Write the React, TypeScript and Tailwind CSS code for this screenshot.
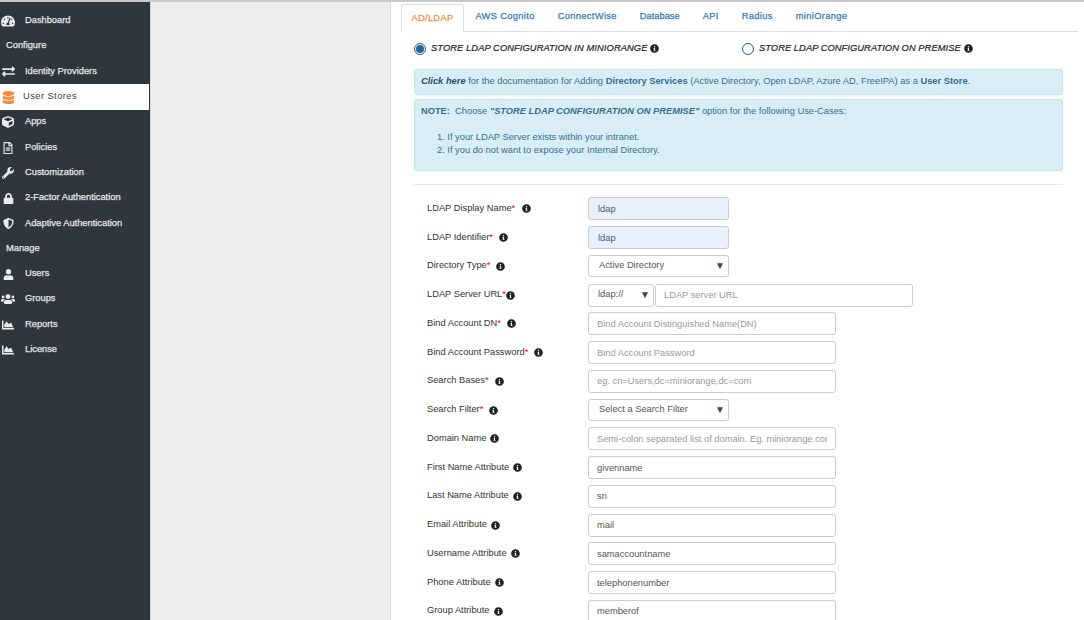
import React from "react";
import { FaTachometerAlt, FaExchangeAlt, FaDatabase, FaCube, FaRegFileAlt, FaWrench, FaLock, FaShieldAlt, FaUser, FaUsers, FaChartArea, FaInfoCircle } from "react-icons/fa";

type Nav = { label: string; icon?: React.ComponentType<{ className?: string }>; head?: boolean; active?: boolean; cls?: string };

const nav: Nav[] = [
  { label: "Dashboard", icon: FaTachometerAlt, cls: "text-[14px]" },
  { label: "Configure", head: true },
  { label: "Identity Providers", icon: FaExchangeAlt, cls: "text-[13px]" },
  { label: "User Stores", icon: FaDatabase, active: true, cls: "text-[13px]" },
  { label: "Apps", icon: FaCube, cls: "text-[12px]" },
  { label: "Policies", icon: FaRegFileAlt, cls: "text-[12px]" },
  { label: "Customization", icon: FaWrench, cls: "text-[12px]" },
  { label: "2-Factor Authentication", icon: FaLock, cls: "text-[11px]" },
  { label: "Adaptive Authentication", icon: FaShieldAlt, cls: "text-[11px]" },
  { label: "Manage", head: true },
  { label: "Users", icon: FaUser, cls: "text-[11px]" },
  { label: "Groups", icon: FaUsers, cls: "text-[14px]" },
  { label: "Reports", icon: FaChartArea, cls: "text-[12px]" },
  { label: "License", icon: FaChartArea, cls: "text-[12px]" },
];

const tabs = ["AD/LDAP", "AWS Cognito", "ConnectWise", "Database", "API", "Radius", "miniOrange"];

type Row = { label: string; req?: boolean; gap?: string; kind: "input" | "select" | "url"; value?: string; placeholder?: string; filled?: boolean };

const rows: Row[] = [
  { label: "LDAP Display Name", req: true, gap: "ml-[7px]", kind: "input", value: "ldap", filled: true },
  { label: "LDAP Identifier", req: true, gap: "ml-[6px]", kind: "input", value: "ldap", filled: true },
  { label: "Directory Type", req: true, gap: "ml-[6px]", kind: "select", value: "Active Directory" },
  { label: "LDAP Server URL", req: true, gap: "ml-0", kind: "url" },
  { label: "Bind Account DN", req: true, gap: "ml-[6px]", kind: "input", placeholder: "Bind Account Distinguished Name(DN)" },
  { label: "Bind Account Password", req: true, gap: "ml-[6px]", kind: "input", placeholder: "Bind Account Password" },
  { label: "Search Bases", req: true, gap: "ml-[6px]", kind: "input", placeholder: "eg. cn=Users,dc=miniorange,dc=com" },
  { label: "Search Filter", req: true, gap: "ml-[6px]", kind: "select", value: "Select a Search Filter" },
  { label: "Domain Name", gap: "ml-[4px]", kind: "input", placeholder: "Semi-colon separated list of domain. Eg. miniorange.com" },
  { label: "First Name Attribute", gap: "ml-[4px]", kind: "input", value: "givenname" },
  { label: "Last Name Attribute", gap: "ml-[4px]", kind: "input", value: "sn" },
  { label: "Email Attribute", gap: "ml-[4px]", kind: "input", value: "mail" },
  { label: "Username Attribute", gap: "ml-[4px]", kind: "input", value: "samaccountname" },
  { label: "Phone Attribute", gap: "ml-[4px]", kind: "input", value: "telephonenumber" },
  { label: "Group Attribute", gap: "ml-[4px]", kind: "input", value: "memberof" },
];

function Arrow() {
  return <span className="text-[10px] leading-none text-[#444]">▼</span>;
}

function Field({ r }: { r: Row }) {
  if (r.kind === "url") {
    return (
      <div className="flex gap-px">
        <div className="flex h-[23px] w-[66px] items-center justify-between rounded-[3px] border border-[#ccc] bg-white pl-[9px] pr-[3px] text-[#555]">
          <span>ldap://</span>
          <Arrow />
        </div>
        <input readOnly placeholder="LDAP server URL" className="h-[23px] w-[258px] rounded-[3px] border border-[#ccc] bg-white px-[8px] outline-none placeholder:text-[#999]" />
      </div>
    );
  }
  if (r.kind === "select") {
    return (
      <div className="flex h-[22px] w-[141px] items-center justify-between rounded-[3px] border border-[#ccc] bg-white pl-[10px] pr-[3px] text-[#555]">
        <span>{r.value}</span>
        <Arrow />
      </div>
    );
  }
  return (
    <input
      readOnly
      value={r.value}
      placeholder={r.placeholder}
      className={
        r.filled
          ? "h-[23px] w-[141px] rounded-[3px] border border-[#ccc] bg-[#e8f0fe] px-[9px] text-[#555] outline-none"
          : "h-[23px] w-[248px] rounded-[3px] border border-[#ccc] bg-white px-[8px] text-[#555] outline-none placeholder:text-[#999]"
      }
    />
  );
}

export default function App() {
  return (
    <div className="flex h-[620px] w-full flex-col overflow-hidden bg-white font-['Liberation_Sans',Arial,sans-serif] text-[9.3px] text-[#333]">
      <div className="h-[2px] shrink-0 bg-[#c9c9c9]" />
      <div className="flex min-h-0 flex-1">
        <aside className="flex w-[150px] shrink-0 flex-col bg-[#2f363e] pt-[6.5px] text-[9.3px] text-[#e4e6e8] [-webkit-text-stroke:0.25px_#e4e6e8]">
          {nav.map((n) =>
            n.head ? (
              <div key={n.label} className="flex h-[25.3px] items-center pl-[6px]">{n.label}</div>
            ) : (
              <div key={n.label} className={n.active ? "flex h-[25.3px] w-[149px] items-center bg-white text-[#3a3a3a] tracking-[0.45px] [-webkit-text-stroke:0px]" : "flex h-[25.3px] items-center"}>
                <span className="flex w-[16px] shrink-0 justify-center">
                  {n.icon && <n.icon className={`${n.cls} ${n.active ? "text-[#f58b3c]" : "text-[#e8eaec]"}`} />}
                </span>
                <span className={n.active ? "ml-[7px]" : "ml-[9px]"}>{n.label}</span>
              </div>
            )
          )}
        </aside>
        <div className="w-[240px] shrink-0 border-l border-[#d8d8d8] bg-[#eeeeee]" />
        <main className="min-w-0 flex-1 border-l border-[#dcdcdc] bg-white pl-[10px] pr-[6px]">
          <div className="flex h-[30px] items-end border-b border-[#ddd] pt-[3px]">
            {tabs.map((t, i) => (
              <div
                key={t}
                className={
                  i === 0
                    ? "-mb-px flex h-[28px] items-center rounded-t-[3px] border border-b-0 border-[#ddd] bg-white px-[9.5px] text-[#f58b3c] tracking-[0.3px] [-webkit-text-stroke:0.25px_#f58b3c]"
                    : t === "Database"
                    ? "flex h-[28px] items-center px-[11.5px] text-[#337ab7] tracking-[0px] [-webkit-text-stroke:0.25px_#337ab7]"
                    : "flex h-[28px] items-center px-[11.5px] text-[#337ab7] tracking-[0.35px] [-webkit-text-stroke:0.25px_#337ab7]"
                }
              >
                {t}
              </div>
            ))}
          </div>
          <div className="pl-[13px] pr-[15px]">
            <div className="flex h-[37px] items-center pb-[4px] text-[#222] italic [-webkit-text-stroke:0.2px_#222]">
              <div className="flex w-[328px] items-center">
                <span className="flex size-[12px] items-center justify-center rounded-full border border-[#1d5c8f]">
                  <span className="size-[8px] rounded-full bg-[#25639b]" />
                </span>
                <span className="ml-[5px] tracking-[0.1px]">STORE LDAP CONFIGURATION IN MINIORANGE</span>
                <FaInfoCircle className="ml-[3px] text-[9px] text-[#222]" />
              </div>
              <div className="flex items-center">
                <span className="size-[12px] rounded-full border border-[#1d5c8f]" />
                <span className="ml-[5px] tracking-[0.07px]">STORE LDAP CONFIGURATION ON PREMISE</span>
                <FaInfoCircle className="ml-[3px] text-[9px] text-[#222]" />
              </div>
            </div>
            <div className="flex h-[26px] items-center rounded-[3px] border border-[#bce8f1] bg-[#d9edf7] pl-[6px] text-[#31708f] tracking-[0.015px]">
              <span><b className="italic text-[#245269]">Click here</b> for the documentation for Adding <b>Directory Services</b> (Active Directory, Open LDAP, Azure AD, FreeIPA) as a <b>User Store</b>.</span>
            </div>
            <div className="mt-[4px] h-[72px] rounded-[3px] border border-[#bce8f1] bg-[#d9edf7] pl-[6px] pt-[4.5px] leading-[13px] text-[#31708f]">
              <div><b>NOTE:</b>&nbsp; Choose <b className="italic">"STORE LDAP CONFIGURATION ON PREMISE"</b> option for the following Use-Cases:</div>
              <div className="mt-[13px] pl-[16px]">1. If your LDAP Server exists within your intranet.</div>
              <div className="pl-[16px]">2. If you do not want to expose your Internal Directory.</div>
            </div>
            <div className="mt-[13px] border-t border-[#e8e8e8]" />
            <div className="mt-[9.5px]">
              {rows.map((r) => (
                <div key={r.label} className="flex h-[28.75px] items-center">
                  <div className="flex w-[174px] items-center pl-[13px] text-[#333]">
                    <span>{r.label}</span>
                    {r.req && <span className="text-[#e00]">*</span>}
                    <FaInfoCircle className={`${r.gap} text-[9px] text-[#222]`} />
                  </div>
                  <Field r={r} />
                </div>
              ))}
            </div>
          </div>
        </main>
      </div>
    </div>
  );
}
